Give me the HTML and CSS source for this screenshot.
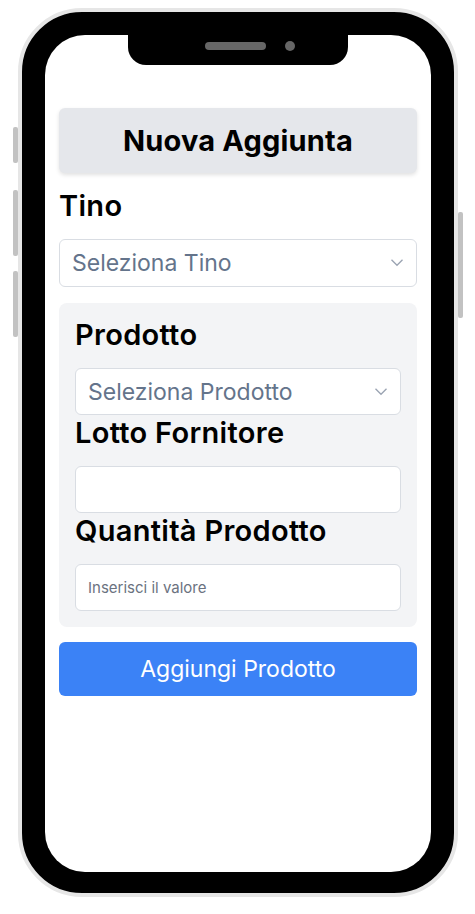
FILE: index.html
```html
<!DOCTYPE html>
<html lang="it">
<head>
    <meta charset="UTF-8">
    <meta name="viewport" content="width=device-width, initial-scale=1.0">
    <title>Nuova Aggiunta</title>
    <link rel="stylesheet" href="styles.css">
</head>
<body>
    <div class="phone">
        <span class="side-btn btn-mute"></span>
        <span class="side-btn btn-vol-up"></span>
        <span class="side-btn btn-vol-down"></span>
        <span class="side-btn btn-power"></span>

        <div class="screen">
            <div class="notch">
                <span class="speaker"></span>
                <span class="camera"></span>
            </div>

            <div class="content">
                <div class="title-card">
                    <h1>Nuova Aggiunta</h1>
                </div>

                <div class="field">
                    <label for="tino">Tino</label>
                    <div class="select-wrap">
                        <select id="tino">
                            <option>Seleziona Tino</option>
                        </select>
                        <svg class="chevron" viewBox="0 0 20 20"><path d="M5 8l5 5 5-5" /></svg>
                    </div>
                </div>

                <div class="panel">
                    <label for="prodotto">Prodotto</label>
                    <div class="select-wrap">
                        <select id="prodotto">
                            <option>Seleziona Prodotto</option>
                        </select>
                        <svg class="chevron" viewBox="0 0 20 20"><path d="M5 8l5 5 5-5" /></svg>
                    </div>

                    <label for="lotto">Lotto Fornitore</label>
                    <input type="text" id="lotto">

                    <label for="quantita">Quantità Prodotto</label>
                    <input type="text" id="quantita" class="small" placeholder="Inserisci il valore">
                </div>

                <button type="button" class="add-btn">Aggiungi Prodotto</button>
            </div>
        </div>
    </div>
</body>
</html>
```

FILE: styles.css
```css
* {
    box-sizing: border-box;
}

body {
    margin: 0;
    padding: 8px 0 0 18px;
    background-color: #fff;
    font-family: Inter, "Noto Sans", sans-serif;
}

.phone {
    position: relative;
    width: 440px;
    height: 889px;
    padding: 23px 23px 21px 23px;
    background-color: #000;
    border: 4px solid #e6e6e6;
    border-radius: 64px;
}

.side-btn {
    position: absolute;
    width: 5px;
    background-color: #c2c2c2;
    border-radius: 2px;
}

.btn-mute {
    left: -9px;
    top: 115px;
    height: 36px;
}

.btn-vol-up {
    left: -9px;
    top: 178px;
    height: 66px;
}

.btn-vol-down {
    left: -9px;
    top: 259px;
    height: 66px;
}

.btn-power {
    right: -9px;
    top: 200px;
    height: 106px;
}

.screen {
    position: relative;
    height: 100%;
    background-color: #fff;
    border-radius: 40px;
    overflow: hidden;
}

.notch {
    position: absolute;
    top: 0;
    left: 83px;
    width: 220px;
    height: 30px;
    background-color: #000;
    border-radius: 0 0 18px 18px;
    display: flex;
    justify-content: center;
    align-items: center;
    gap: 19px;
    padding: 0 0 8px 24px;
}

.speaker {
    width: 61px;
    height: 8px;
    background-color: #666;
    border-radius: 4px;
}

.camera {
    width: 10px;
    height: 10px;
    background-color: #666;
    border-radius: 50%;
}

.content {
    padding: 73px 14px 0 14px;
    display: flex;
    flex-direction: column;
}

.title-card {
    height: 65px;
    background-color: #e5e7eb;
    border-radius: 6px;
    box-shadow: 0 2px 4px rgba(0, 0, 0, 0.12);
    display: flex;
    align-items: center;
    justify-content: center;
    margin-bottom: 15px;
}

h1 {
    margin: 0;
    font-size: 29px;
    font-weight: 700;
    letter-spacing: 0.2px;
    color: #000;
}

label {
    display: block;
    font-size: 29px;
    line-height: 36px;
    font-weight: 600;
    letter-spacing: 0.3px;
    color: #000;
    margin-bottom: 15px;
}

.field {
    margin-bottom: 16px;
}

.select-wrap {
    position: relative;
}

select {
    appearance: none;
    -webkit-appearance: none;
    width: 100%;
    height: 48px;
    padding: 0 40px 0 12px;
    font-family: inherit;
    font-size: 23px;
    color: #64748b;
    background-color: #fff;
    border: 1px solid #d9dde3;
    border-radius: 6px;
}

.chevron {
    position: absolute;
    right: 9px;
    top: 12px;
    width: 22px;
    height: 22px;
    fill: none;
    stroke: #9aa3b2;
    stroke-width: 1.2;
    pointer-events: none;
}

.panel {
    background-color: #f3f4f6;
    border-radius: 8px;
    padding: 14px 16px 16px 16px;
    margin-bottom: 15px;
}

.panel .select-wrap select {
    height: 47px;
}

.panel .chevron {
    top: 12px;
}

input {
    display: block;
    width: 100%;
    height: 47px;
    padding: 0 12px;
    font-family: inherit;
    font-size: 20px;
    background-color: #fff;
    border: 1px solid #d9dde3;
    border-radius: 6px;
}

input.small {
    font-size: 15px;
}

input::placeholder {
    color: #6b7280;
}

.add-btn {
    height: 54px;
    border: none;
    border-radius: 6px;
    background-color: #3b82f6;
    color: #fff;
    font-family: inherit;
    font-size: 23px;
    cursor: pointer;
}
```
